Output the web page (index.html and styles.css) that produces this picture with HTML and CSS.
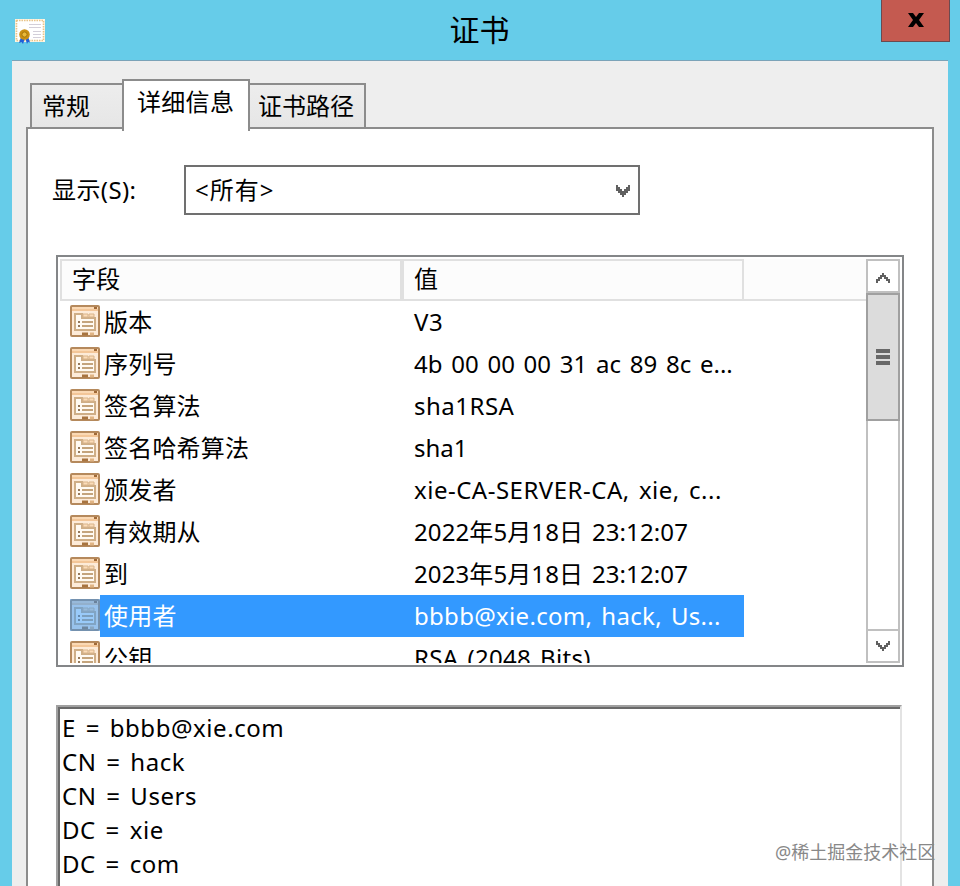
FILE: index.html
```
<!DOCTYPE html>
<html lang="zh-CN">
<head>
<meta charset="utf-8">
<title>证书</title>
<link rel="stylesheet" href="styles.css">
</head>
<body>
<svg class="defs" aria-hidden="true">
  <symbol id="field" viewBox="0 0 30 32">
    <rect x="1" y="1" width="28" height="30" rx="1" fill="#fdebd8" stroke="#b5895c" stroke-width="2"/>
    <path d="M2 3h26" stroke="#fbd9b4" stroke-width="2"/>
    <path d="M2 5h26" stroke="#f3c698" stroke-width="2"/>
    <path d="M24 3h3" stroke="#a06a38" stroke-width="2"/>
    <path d="M5 25V9h7v4h13v12z" fill="#fffaf2" stroke="#cfae86" stroke-width="2"/>
    <path d="M13 9h5v3h-5zM19 9h5v3h-5z" fill="#fbdcb8" stroke="#d9b48a"/>
    <path d="M12 17h11M12 21h11" stroke="#c4a47c" stroke-width="2"/>
    <path d="M8 17h2M8 21h2" stroke="#97795a" stroke-width="2"/>
    <path d="M12 29h6" stroke="#a87440" stroke-width="3"/>
    <path d="M20 29h4" stroke="#e0b484" stroke-width="3"/>
  </symbol>
</svg>
<div class="window">
  <header class="titlebar">
    <svg class="cert" viewBox="0 0 32 28">
      <rect x="1" y="1" width="30" height="23" fill="#fff6e4"/>
      <rect x="2.500" y="2.500" width="27" height="20" fill="#fff" stroke="#e8c48a" stroke-width="1.600" stroke-dasharray="1.500 1"/>
      <path d="M15 6.500h12M15 9.500h12M19 13.500h8M19 16.500h8M19 19.500h8" stroke="#d3cfd9"/>
      <path d="M7 19l-2 6 2.500-1 1.500 2 2-6zM11 19l2 7 1-2 2 .5-2-6z" fill="#2160d8"/>
      <circle cx="10.500" cy="16.500" r="5.300" fill="#c98f12"/>
      <circle cx="10.500" cy="16.500" r="2.600" fill="#e9b93a" stroke="#a87808"/>
    </svg>
    <h1>证书</h1>
    <button class="close" aria-label="关闭"><svg viewBox="0 0 16 14" width="16" height="14"><path d="M0 0h5l3 4 3-4h5l-5 7 5 7h-5l-3-4-3 4H0l5-7z"/></svg></button>
  </header>
  <main class="client">
    <nav class="tabs">
      <div class="tab t1">常规</div>
      <div class="tab active">详细信息</div>
      <div class="tab t3">证书路径</div>
    </nav>
    <section class="page">
      <div class="filter">
        <label>显示(S):</label>
        <div class="combo"><span>&lt;所有&gt;</span><svg viewBox="0 0 7 6" width="14" height="12"><path d="M0 0h1v1h1v1h1v1h1V2h1V1h1V0h1v3H6v1H5v1H4v1H3V5H2V4H1V3H0z"/></svg></div>
      </div>
      <div class="list">
        <div class="content">
          <div class="head"><div class="h1">字段</div><div class="h2">值</div><div class="h3"></div></div>
          <div class="row"><svg class="ico"><use href="#field"/></svg><span class="name">版本</span><span class="val v1">V3</span></div>
          <div class="row"><svg class="ico"><use href="#field"/></svg><span class="name">序列号</span><span class="val">4b 00 00 00 31 ac 89 8c e...</span></div>
          <div class="row"><svg class="ico"><use href="#field"/></svg><span class="name">签名算法</span><span class="val v1">sha1RSA</span></div>
          <div class="row"><svg class="ico"><use href="#field"/></svg><span class="name">签名哈希算法</span><span class="val">sha1</span></div>
          <div class="row"><svg class="ico"><use href="#field"/></svg><span class="name">颁发者</span><span class="val issuer">xie-CA-SERVER-CA, xie, c...</span></div>
          <div class="row"><svg class="ico"><use href="#field"/></svg><span class="name">有效期从</span><span class="val date">2022年5月18日 23:12:07</span></div>
          <div class="row"><svg class="ico"><use href="#field"/></svg><span class="name">到</span><span class="val date">2023年5月18日 23:12:07</span></div>
          <div class="row selected"><span class="mark"><svg class="ico"><use href="#field"/></svg></span><span class="name">使用者</span><span class="val subject">bbbb@xie.com, hack, Us...</span></div>
          <div class="row"><svg class="ico"><use href="#field"/></svg><span class="name">公钥</span><span class="val subject">RSA (2048 Bits)</span></div>
        </div>
        <div class="scroll">
          <div class="arrow"><svg viewBox="0 0 7 5" width="14" height="10"><path d="M3 0h1v1h1v1h1v1h1v2H6V4H5V3H4V2H3v1H2v1H1v1H0V3h1V2h1V1h1z"/></svg></div>
          <div class="thumb"><i></i><i></i><i></i></div>
          <div class="track"></div>
          <div class="arrow down"><svg viewBox="0 0 7 5" width="14" height="10"><path d="M0 0h1v1h1v1h1v1h1V2h1V1h1V0h1v2H6v1H5v1H4v1H3V4H2V3H1V2H0z"/></svg></div>
        </div>
      </div>
      <div class="detail">
        <p>E = bbbb@xie.com</p>
        <p>CN = hack</p>
        <p>CN = Users</p>
        <p>DC = xie</p>
        <p>DC = com</p>
      </div>
    </section>
  </main>
  <div class="watermark">@稀土掘金技术社区</div>
</div>
</body>
</html>
```
FILE: styles.css
```
* { box-sizing: border-box; }
body {
  margin: 0;
  font: 24px/34px "Noto Sans", "Noto Sans CJK SC", sans-serif;
  color: #000;
  overflow: hidden;
}
.defs { display: none; }
.window {
  position: relative;
  width: 960px;
  height: 886px;
  background: #66cce9;
  overflow: hidden;
  white-space: nowrap;
}
.titlebar {
  display: flex;
  justify-content: space-between;
  height: 60px;
  padding: 0 10px 0 14px;
}
.cert { width: 32px; height: 28px; margin-top: 18px; }
h1 {
  margin: 10px 0 0 32px;
  font-size: 30px;
  line-height: 40px;
  font-weight: 400;
}
.close {
  width: 69px;
  height: 42px;
  padding: 0 0 2px;
  border: 1px solid #6b4a50;
  border-top: 0;
  background: #c45a50;
  display: flex;
  align-items: center;
  justify-content: center;
}
svg { flex: none; }
.client {
  height: 826px;
  margin: 0 12px;
  padding: 18px 14px 0;
  border-top: 1px solid #7ba3b8;
  background: #eee;
}
.tabs {
  display: flex;
  align-items: flex-end;
  height: 48px;
  padding-left: 4px;
}
.tab {
  height: 44px;
  border: 2px solid #8c8c8c;
  border-bottom: 0;
  background: linear-gradient(#ededed, #e6e6e6);
  line-height: 42px;
}
.t1 { width: 92px; border-right: 0; padding-left: 10px; }
.t3 { width: 116px; border-left: 0; padding-left: 8px; }
.active {
  position: relative;
  z-index: 1;
  width: 128px;
  height: 52px;
  margin-bottom: -4px;
  padding-left: 13px;
  background: #fff;
  letter-spacing: .3px;
}
.page {
  height: 759px;
  padding: 36px 28px 0;
  border: 2px solid #8c8c8c;
  border-bottom: 0;
  background: #fff;
}
.filter { display: flex; height: 50px; }
.filter label {
  width: 132px;
  margin-left: -4px;
  line-height: 50px;
  letter-spacing: .4px;
}
.combo {
  display: flex;
  align-items: center;
  justify-content: space-between;
  width: 456px;
  height: 50px;
  padding: 0 8px 0 9px;
  border: 2px solid #707070;
  letter-spacing: 1px;
}
.combo svg { fill: #606060; margin-top: 2px; }
.list {
  display: flex;
  width: 848px;
  height: 412px;
  margin-top: 40px;
  padding: 2px;
  border: 2px solid #848688;
}
.content { width: 806px; height: 404px; overflow: hidden; }
.head { display: flex; height: 42px; background: #fcfcfc; line-height: 36px; }
.head div { border: 2px solid #e0e0e0; }
.head .h1 { width: 342px; padding-left: 10px; letter-spacing: .3px; }
.head .h2 { width: 342px; padding-left: 10px; }
.head .h3 { flex: 1; border-width: 0 0 2px; }
.row { display: flex; height: 42px; padding-left: 10px; line-height: 42px; }
.ico { display: block; width: 30px; height: 32px; margin-top: 4px; }
.name { width: 310px; padding-left: 4px; letter-spacing: .2px; }
.val { width: 334px; padding-left: 4px; word-spacing: 2.5px; }
.v1 { letter-spacing: .5px; }
.issuer { letter-spacing: .5px; }
.date { letter-spacing: .1px; }
.subject { letter-spacing: .3px; }
.selected .name, .selected .val { background: #39f; color: #fff; }
.mark { position: relative; }
.mark::after {
  content: "";
  position: absolute;
  inset: 4px 0 6px;
  background: #39f;
  opacity: .5;
}
.scroll { display: flex; flex-direction: column; width: 34px; height: 404px; }
.arrow {
  display: flex;
  align-items: center;
  justify-content: center;
  height: 34px;
  border: 2px solid #c0c0c0;
}
.arrow svg { fill: #606060; margin-top: 4px; }
.arrow.down svg { margin-top: 0; }
.thumb {
  display: flex;
  flex-direction: column;
  align-items: center;
  justify-content: center;
  gap: 2px;
  height: 128px;
  border: 2px solid #a0a0a0;
  background: #dcdcdc;
}
.thumb i { width: 14px; height: 4px; background: #686868; }
.track { flex: 1; border: solid #c0c0c0; border-width: 0 2px; }
.detail {
  width: 846px;
  height: 190px;
  margin-top: 38px;
  padding: 4px 0 0 4px;
  border-top: 2px solid #a0a0a0;
  border-left: 2px solid #a0a0a0;
  border-right: 2px solid #e3e3e3;
  box-shadow: inset 2px 2px #696969;
  word-spacing: 3px;
  letter-spacing: .55px;
}
p { margin: 0; height: 34px; }
.watermark {
  position: absolute;
  left: 775px;
  top: 838px;
  font-size: 18px;
  line-height: 28px;
  color: #888;
}
```
